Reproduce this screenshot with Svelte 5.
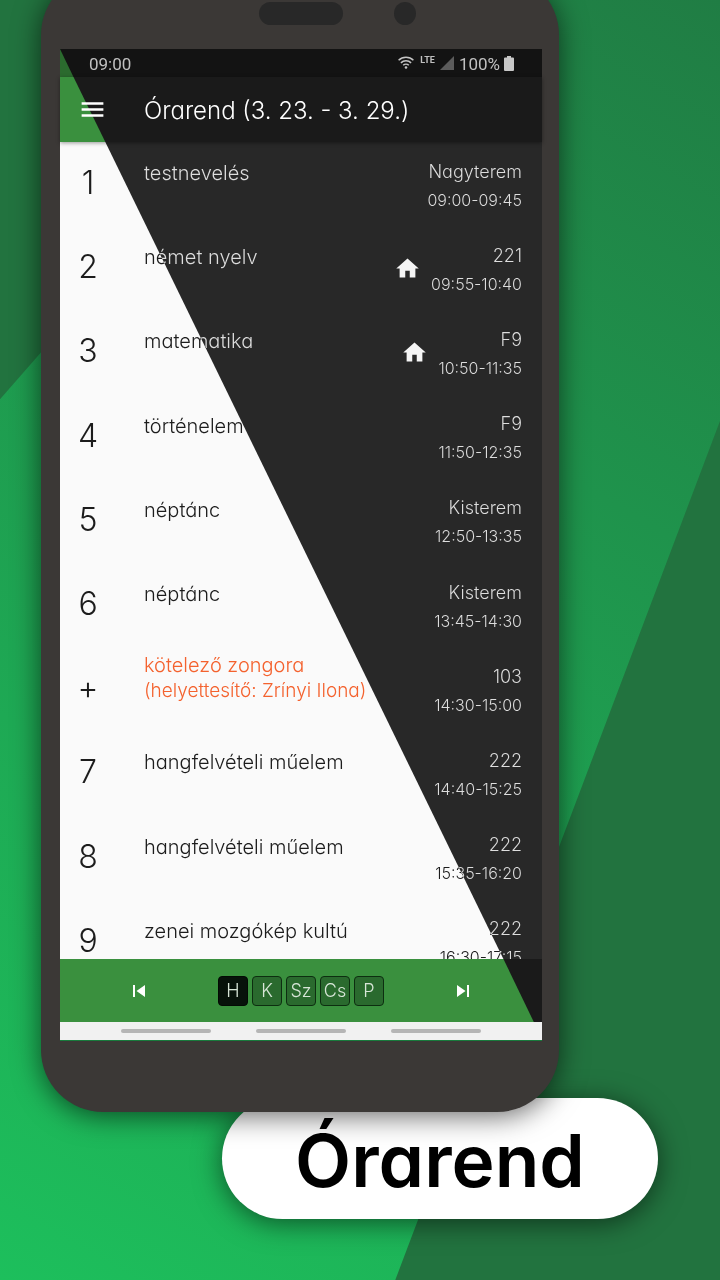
<script>
  const lessons = [
    { no: '1', name: 'testnevelés', room: 'Nagyterem', time: '09:00-09:45' },
    { no: '2', name: 'német nyelv', room: '221', time: '09:55-10:40', homework: true },
    { no: '3', name: 'matematika', room: 'F9', time: '10:50-11:35', homework: true },
    { no: '4', name: 'történelem', room: 'F9', time: '11:50-12:35' },
    { no: '5', name: 'néptánc', room: 'Kisterem', time: '12:50-13:35' },
    { no: '6', name: 'néptánc', room: 'Kisterem', time: '13:45-14:30' },
    { no: '+', name: 'kötelező zongora', note: '(helyettesítő: Zrínyi Ilona)', room: '103', time: '14:30-15:00' },
    { no: '7', name: 'hangfelvételi műelem', room: '222', time: '14:40-15:25' },
    { no: '8', name: 'hangfelvételi műelem', room: '222', time: '15:35-16:20' },
    { no: '9', name: 'zenei mozgókép kultú', room: '222', time: '16:30-17:15' }
  ];
  const days = ['H', 'K', 'Sz', 'Cs', 'P'];
  let selected = $state('H');
</script>

<main>
  <div class="phone">
    <div class="bezel">
      <span class="speaker"></span>
      <span class="camera"></span>
    </div>

    <div class="screen">
      <div class="status split">
        <span class="clock">09:00</span>
        <svg class="wifi" viewBox="0 0 16 13" aria-hidden="true">
          <g fill="none" stroke="#c4c4c4" stroke-width="1.5">
            <path d="M.6 4.3a10.6 10.6 0 0 1 14.8 0" />
            <path d="M2.9 6.9a7.2 7.2 0 0 1 10.2 0" />
            <path d="M5.2 9.3a4 4 0 0 1 5.6 0" />
          </g>
          <circle cx="8" cy="11.5" r="1.3" fill="#c4c4c4" />
        </svg>
        <span class="lte">LTE</span>
        <svg class="signal" viewBox="0 0 14 14" aria-hidden="true"><path d="M14 0v14H0z" fill="#5c5c5c" /></svg>
        <span class="charge">100%</span>
        <svg class="battery" viewBox="0 0 10 15" aria-hidden="true">
          <path d="M3 0h4v1.500h2q1 0 1 1V14q0 1-1 1H1q-1 0-1-1V2.500q0-1 1-1h2z" fill="#c8c8c8" />
        </svg>
      </div>

      <header class="split">
        <button class="icon" aria-label="Menü">
          <svg class="menu" viewBox="0 0 24 24"><path d="M3 18h18v-2H3v2zm0-5h18v-2H3v2zm0-7v2h18V6H3z" /></svg>
        </button>
        <h2>Órarend (3. 23. - 3. 29.)</h2>
      </header>

      <div class="list">
        <ol>
          {#each lessons as lesson}
            <li>
              <span class="no">{lesson.no}</span>
              <span class="name" class:changed={lesson.note}>
                {lesson.name}
                {#if lesson.note}<span class="note">{lesson.note}</span>{/if}
              </span>
              {#if lesson.homework}
                <svg class="home" viewBox="0 0 24 24" aria-hidden="true"><path d="M10 20v-6h4v6h5v-8h3L12 3 2 12h3v8z" /></svg>
              {/if}
              <span class="place">
                <span class="room">{lesson.room}</span>
                <span class="time">{lesson.time}</span>
              </span>
            </li>
          {/each}
        </ol>
      </div>

      <footer class="split">
        <button class="icon" aria-label="Előző hét">
          <svg class="skip" viewBox="0 0 24 24"><path d="M6 6h2v12H6zm3.500 6l8.500 6V6z" /></svg>
        </button>
        <div class="days">
          {#each days as day}
            <button class="day" class:selected={selected === day} onclick={() => (selected = day)}>{day}</button>
          {/each}
        </div>
        <button class="icon" aria-label="Következő hét">
          <svg class="skip" viewBox="0 0 24 24"><path d="M6 18l8.500-6L6 6v12zM16 6v12h2V6h-2z" /></svg>
        </button>
      </footer>

      <div class="gestures"><span></span><span></span><span></span></div>
    </div>
  </div>

  <h1>Órarend</h1>
</main>

<style>
  :global(body) {
    margin: 0;
  }

  main {
    position: relative;
    isolation: isolate;
    box-sizing: border-box;
    min-height: 100vh;
    overflow: hidden;
    padding: 0 62px 61px 41px;
    background: linear-gradient(30deg, #1dbf5c, #207d44);
    font-family: Inter, 'Open Sans', sans-serif;
    font-feature-settings: 'cv11';
    font-weight: 300;
  }

  /* dark facets of the backdrop */
  main::before {
    content: '';
    position: absolute;
    inset: 0;
    z-index: -2;
    background: #22733f;
    clip-path: polygon(0 0, 48.5% 0, 0 31.2%, 0 100%, 54.9% 100%, 100% 32.9%, 100% 100%, 0 100%);
  }

  .phone {
    margin: -27px 99px 0 0;
    padding: 0 17px 71px 19px;
    border-radius: 62px;
    background: #3b3836;
    box-shadow: 0 4px 28px rgba(0, 0, 0, 0.6);
  }

  .bezel {
    display: grid;
    grid-template-columns: 1fr 84px 1fr;
    align-items: center;
    height: 47px;
    padding: 17px 0 12px;
  }

  .speaker {
    grid-column: 2;
    height: 23px;
    border-radius: 12px;
    background: #282828;
  }

  .camera {
    width: 22px;
    height: 23px;
    margin-left: 51px;
    border-radius: 50%;
    background: #282828;
  }

  .screen {
    border-bottom: 1px solid #187a3c;
  }

  /* bars that change theme along the diagonal */
  .split {
    position: relative;
    isolation: isolate;
  }

  .split::before {
    content: '';
    position: absolute;
    inset: 0;
    z-index: -1;
    background: #1a1a1a;
  }

  .status {
    display: flex;
    align-items: center;
    height: 28px;
    padding: 0 28px 0 29px;
    background: #2b6a2e;
    color: #c0c0c0;
    font: 400 17px/28px Roboto, sans-serif;
  }

  .status::before {
    background: #131313;
    clip-path: polygon(0 0, 100% 0, 100% 100%, 2.8% 100%);
  }

  .clock {
    flex: 1;
    padding-top: 2px;
  }

  .wifi {
    width: 16px;
    height: 13px;
    margin-right: 6px;
    padding-bottom: 2px;
  }

  .lte {
    margin-right: 5px;
    padding-bottom: 6px;
    font-size: 9px;
    line-height: 12px;
    font-weight: 700;
  }

  .signal {
    width: 14px;
    height: 14px;
    margin-right: 5px;
  }

  .charge {
    margin-right: 4px;
    padding-top: 2px;
  }

  .battery {
    width: 10px;
    height: 15px;
  }

  header {
    z-index: 2;
    display: flex;
    align-items: center;
    gap: 37px;
    height: 65px;
    padding-left: 18px;
    background: #3a903e;
    box-shadow: 0 1px 4px rgba(0, 0, 0, 0.4);
  }

  header::before {
    clip-path: polygon(2.8% 0, 100% 0, 100% 100%, 9.4% 100%);
  }

  h2 {
    margin: 0;
    padding-top: 3px;
    color: #fff;
    font-size: 24px;
    line-height: 32px;
    font-weight: 300;
    white-space: nowrap;
  }

  .icon {
    display: grid;
    place-items: center;
    justify-self: center;
    padding: 0;
    border: 0;
    background: none;
    fill: #fff;
  }

  .menu {
    width: 29px;
    height: 29px;
  }

  .skip {
    width: 24px;
    height: 24px;
  }

  .list {
    position: relative;
    height: 817px;
    overflow: hidden;
    background: #fafafa;
  }

  /* inverts the light theme on the right of the diagonal */
  .list::after {
    content: '';
    position: absolute;
    inset: 0;
    backdrop-filter: invert(0.872) brightness(1.1);
    clip-path: polygon(9.4% 0, 100% 0, 100% 100%, 92% 100%);
    pointer-events: none;
  }

  ol {
    display: grid;
    grid-template-rows: repeat(10, 1fr);
    height: 842px;
    margin: 0;
    padding: 0 20px 0 0;
    list-style: none;
  }

  li {
    display: grid;
    grid-template-columns: 84px 1fr auto auto;
    align-items: center;
    color: #1c1c1c;
  }

  .no {
    width: 56px;
    padding-bottom: 2px;
    font-size: 32px;
    line-height: 40px;
    text-align: center;
  }

  .name {
    padding-bottom: 22px;
    font-size: 20px;
    line-height: 26px;
    white-space: nowrap;
  }

  .note {
    display: block;
    font-size: 19px;
  }

  .changed {
    color: #f4622e;
  }

  .home {
    grid-column: 3;
    width: 27px;
    height: 27px;
    margin-right: 10px;
    fill: #000;
  }

  .place {
    display: grid;
    grid-column: 4;
    padding-top: 3px;
    line-height: 29px;
    text-align: right;
  }

  .room {
    font-size: 18px;
  }

  .time {
    font-size: 16px;
  }

  footer {
    display: grid;
    grid-template-columns: 1fr auto 1fr;
    align-items: center;
    height: 63px;
    background: #3a903e;
  }

  footer::before {
    clip-path: polygon(92% 0, 100% 0, 100% 100%, 98.3% 100%);
  }

  .days {
    display: flex;
    gap: 4px;
  }

  .day {
    width: 30px;
    height: 30px;
    padding: 0;
    border: 1px solid #0d2e10;
    border-radius: 4px;
    background: #2a6a2e;
    color: #d8e6d8;
    font: inherit;
    font-size: 18px;
    line-height: 28px;
  }

  .selected {
    border-color: #030a04;
    background: #07120a;
  }

  .gestures {
    display: flex;
    align-items: center;
    justify-content: center;
    gap: 45px;
    height: 18px;
    background: #f1f1f1;
  }

  .gestures span {
    width: 90px;
    height: 4px;
    border-radius: 2px;
    background: #b5b5b5;
  }

  h1 {
    position: relative;
    z-index: -1;
    margin: -14px 0 0 181px;
    padding: 19px 0 14px;
    border-radius: 62px;
    background: #fff;
    box-shadow: 0 4px 28px rgba(0, 0, 0, 0.55);
    color: #000;
    font-size: 73px;
    line-height: 88px;
    font-weight: 600;
    text-align: center;
  }
</style>
